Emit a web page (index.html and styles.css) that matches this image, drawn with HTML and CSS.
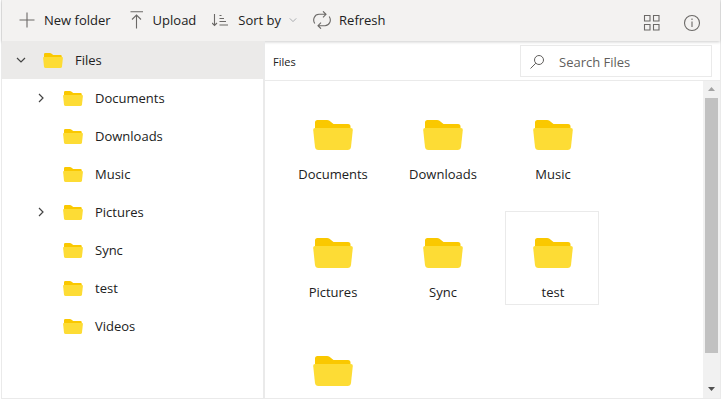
FILE: index.html
```html
<!DOCTYPE html>
<html lang="en">
<head>
<meta charset="utf-8">
<meta name="viewport" content="width=device-width, initial-scale=1">
<title>Files</title>
<link rel="stylesheet" href="styles.css">
</head>
<body>
<svg class="sprite" aria-hidden="true">
  <symbol id="folder" viewBox="0 0 40 30">
    <path fill="#fac800" d="M2 10V2.500Q2 0 4.500 0H14Q15.500 0 16.500 .8L20.500 4H35Q37.500 4 37.500 6.500V10Z"/>
    <path fill="#fddc35" d="M2 8H38Q40 8 39.800 10L38 27Q37.600 30 34.600 30H5.400Q2.400 30 2 27L.2 10Q0 8 2 8Z"/>
  </symbol>
  <symbol id="chevron" viewBox="0 0 10 10">
    <path fill="none" stroke="currentColor" stroke-width="1.200" d="M1 3L5 7L9 3"/>
  </symbol>
</svg>
<div class="manager">
  <header class="toolbar">
    <button class="tool"><svg class="icon" viewBox="0 0 18 18"><path d="M9 1.500V16.500M1.500 9H16.500"/></svg>New folder</button>
    <button class="tool"><svg class="icon" viewBox="0 0 18 18"><path d="M3.500 .7H16M9.500 17.500V4M5 8.500L9.500 4L14 8.500"/></svg>Upload</button>
    <button class="tool"><svg class="icon" viewBox="0 0 18 18"><path d="M2.500 3V14.500M0 12L2.500 14.500L5 12M7.500 4.500H9.500M7.500 7.500H12M7.500 10.500H14M7.500 14H16"/></svg>Sort by<svg class="caret"><use href="#chevron"/></svg></button>
    <button class="tool"><svg class="icon" viewBox="0 0 18 18"><path d="M1.800 12.500C-.8 8.500 1.500 3.300 6 3.300H12.800M10 .3L13 3.300L10 6.300M16.200 5.500C18.800 9.500 16.500 14.700 12 14.700H5.200M8 11.700L5 14.700L8 17.700"/></svg>Refresh</button>
    <span class="spacer"></span>
    <button class="tool" aria-label="View"><svg class="icon" viewBox="0 0 18 18"><path d="M1.500 1.500H7V7H1.500ZM10.500 1.500H16V7H10.500ZM1.500 10.500H7V16H1.500ZM10.500 10.500H16V16H10.500Z"/></svg></button>
    <button class="tool" aria-label="Details"><svg class="icon" viewBox="0 0 18 18"><circle cx="9" cy="9" r="7.500"/><path d="M9 7.500V13M9 4.500V6"/></svg></button>
  </header>
  <div class="body">
    <nav class="tree" aria-label="Folders">
      <a class="node root" href="#"><svg class="arrow open"><use href="#chevron"/></svg><svg class="small"><use href="#folder"/></svg>Files</a>
      <a class="node" href="#"><svg class="arrow"><use href="#chevron"/></svg><svg class="small"><use href="#folder"/></svg>Documents</a>
      <a class="node" href="#"><span class="arrow"></span><svg class="small"><use href="#folder"/></svg>Downloads</a>
      <a class="node" href="#"><span class="arrow"></span><svg class="small"><use href="#folder"/></svg>Music</a>
      <a class="node" href="#"><svg class="arrow"><use href="#chevron"/></svg><svg class="small"><use href="#folder"/></svg>Pictures</a>
      <a class="node" href="#"><span class="arrow"></span><svg class="small"><use href="#folder"/></svg>Sync</a>
      <a class="node" href="#"><span class="arrow"></span><svg class="small"><use href="#folder"/></svg>test</a>
      <a class="node" href="#"><span class="arrow"></span><svg class="small"><use href="#folder"/></svg>Videos</a>
    </nav>
    <main class="content">
      <div class="address">
        <a class="crumb" href="#">Files</a>
        <label class="search"><svg class="glass" viewBox="0 0 14 14"><circle cx="9" cy="5" r="4.500"/><path d="M5.800 8.200L.5 13.500"/></svg><input type="text" placeholder="Search Files" aria-label="Search Files"></label>
      </div>
      <div class="view">
        <div class="tiles">
          <button class="tile"><svg class="large"><use href="#folder"/></svg>Documents</button>
          <button class="tile"><svg class="large"><use href="#folder"/></svg>Downloads</button>
          <button class="tile"><svg class="large"><use href="#folder"/></svg>Music</button>
          <button class="tile"><svg class="large"><use href="#folder"/></svg>Pictures</button>
          <button class="tile"><svg class="large"><use href="#folder"/></svg>Sync</button>
          <button class="tile focused"><svg class="large"><use href="#folder"/></svg>test</button>
          <button class="tile" aria-label="Videos"><svg class="large"><use href="#folder"/></svg></button>
        </div>
        <div class="scrollbar" aria-hidden="true">
          <svg class="step up" viewBox="0 0 17 17"><path d="M5 10H12L8.500 6Z"/></svg>
          <div class="track"><div class="thumb"></div></div>
          <svg class="step" viewBox="0 0 17 17"><path d="M5 6H12L8.500 10Z"/></svg>
        </div>
      </div>
    </main>
  </div>
</div>
</body>
</html>
```
FILE: styles.css
```css
* {
  box-sizing: border-box;
}

body {
  margin: 0;
  background: #fff;
  color: #212121;
  font-family: "Segoe UI", "Open Sans", "Noto Sans", sans-serif;
  font-size: 13px;
  line-height: 20px;
}

button,
input {
  font: inherit;
  color: inherit;
}

button {
  border: 0;
  padding: 0;
  background: none;
}

a {
  color: inherit;
  text-decoration: none;
}

.sprite {
  display: none;
}

.manager {
  display: flex;
  flex-direction: column;
  height: calc(100vh - 1px);
  margin-left: 1px;
  border: 1px solid #eaeaea;
  border-top: 0;
}

.toolbar {
  display: flex;
  align-items: center;
  gap: 16px;
  height: 41px;
  padding: 0 19px 2px 16px;
  background: #f3f2f1;
  box-shadow: 0 1px 3px rgba(0, 0, 0, 0.2);
}

.tool {
  display: flex;
  align-items: center;
  gap: 8px;
  white-space: nowrap;
}

.icon {
  width: 18px;
  height: 18px;
  fill: none;
  stroke: #6b6967;
  stroke-width: 1.1;
}

.caret {
  width: 8px;
  height: 8px;
  color: #a4a8ac;
}

.spacer {
  flex: 1;
}

.spacer ~ .tool {
  margin: 6px 0 0 6px;
}

.body {
  display: flex;
  flex: 1;
  min-height: 0;
}

.tree {
  position: relative;
  width: 263px;
  flex: none;
  background: #fff;
  border-right: 2px solid #eaeaea;
}

.node {
  display: flex;
  align-items: center;
  height: 38px;
  padding-left: 34px;
}

.root {
  padding-left: 14px;
  background: #ebeae9;
}

.arrow {
  width: 10px;
  height: 10px;
  margin-right: 17px;
  color: #444;
  transform: rotate(-90deg);
}

.arrow.open {
  transform: none;
}

.small {
  width: 20px;
  height: 15px;
  margin-right: 12px;
}

.content {
  display: flex;
  flex: 1;
  flex-direction: column;
  min-width: 0;
}

.address {
  display: flex;
  align-items: center;
  justify-content: space-between;
  height: 40px;
  padding: 0 8px;
  border-bottom: 1px solid #eaeaea;
}

.crumb {
  padding-top: 2px;
  font-size: 11px;
}

.search {
  display: flex;
  align-items: center;
  gap: 15px;
  width: 192px;
  height: 32px;
  padding: 2px 9px 0;
  border: 1px solid #eaeaea;
}

.glass {
  flex: none;
  width: 14px;
  height: 14px;
  fill: none;
  stroke: #605e5c;
}

.search input {
  flex: 1;
  min-width: 0;
  padding: 0;
  border: 0;
  outline: 0;
  background: none;
}

.search input::placeholder {
  color: #605e5c;
  opacity: 1;
}

.view {
  display: flex;
  flex: 1;
  min-height: 0;
}

.tiles {
  display: grid;
  flex: 1;
  grid-template-columns: repeat(auto-fill, 94px);
  grid-auto-rows: 94px;
  gap: 24px 16px;
  padding: 12px 20px;
  overflow: hidden;
}

.tile {
  display: flex;
  flex-direction: column;
  align-items: center;
  gap: 14px;
  padding: 26px 0 0 2px;
  border: 1px solid transparent;
}

.focused {
  border-color: #eaeaea;
}

.large {
  flex: none;
  width: 40px;
  height: 30px;
}

.scrollbar {
  display: flex;
  flex-direction: column;
  width: 17px;
  background: #f1f1f1;
}

.step {
  width: 17px;
  height: 17px;
  fill: #505050;
}

.up {
  fill: #a3a3a3;
}

.track {
  flex: 1;
  padding: 0 2px;
}

.thumb {
  height: 90%;
  background: #c1c1c1;
}
```
